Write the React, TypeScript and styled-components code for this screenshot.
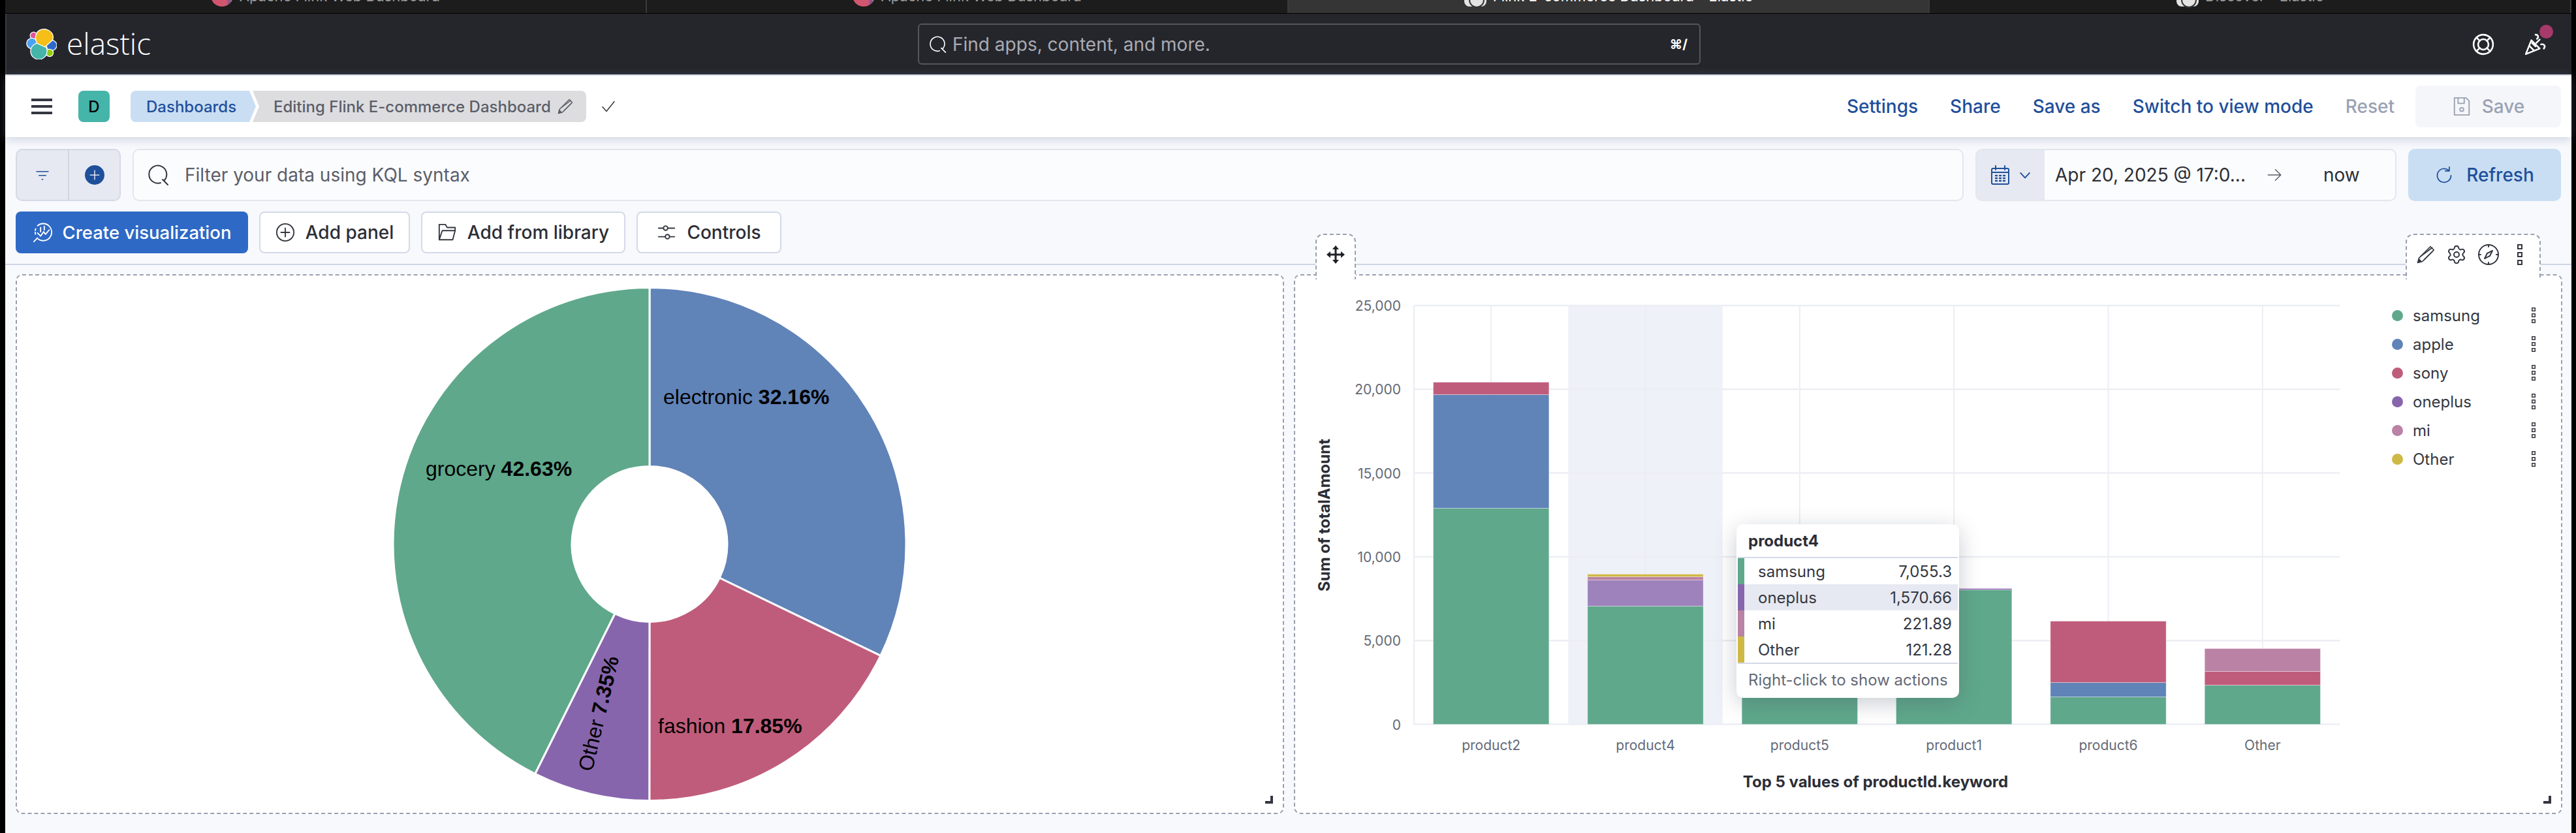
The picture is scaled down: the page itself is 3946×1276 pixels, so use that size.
import styled, { createGlobalStyle } from 'styled-components';
import { Settings } from 'lucide-react';

const GlobalStyle = createGlobalStyle`
    html, body {
        margin: 0;
        padding: 0;
        background: #000;
        overflow: hidden;
    }
    * {
        box-sizing: border-box;
    }
`;

//#region   Data
const GREEN = '#5fa88b';
const BLUE = '#6083b8';
const RED = '#c05c7b';
const PURPLE = '#8765ad';
const PINK = '#ba82a4';
const YELLOW = '#cfb945';

const tabs = [
    { title: 'Apache Flink Web Dashboard', flink: true, active: false },
    { title: 'Apache Flink Web Dashboard', flink: true, active: false },
    { title: 'Flink E-commerce Dashboard - Elastic', flink: false, active: true },
    { title: 'Discover - Elastic', flink: false, active: false },
];

const pieSlices = [
    { pct: 32.16, color: BLUE },
    { pct: 17.85, color: RED },
    { pct: 7.35, color: PURPLE },
    { pct: 42.64, color: GREEN },
];

// height of each stacked segment in chart pixels, from the zero line up
const bars = [
    { name: 'product2', parts: [{ h: 331, c: GREEN }, { h: 174, c: BLUE }, { h: 19, c: RED }] },
    { name: 'product4', parts: [{ h: 181, c: GREEN }, { h: 40, c: '#9d82bb' }, { h: 5, c: PINK }, { h: 4, c: YELLOW }] },
    { name: 'product5', parts: [{ h: 190, c: GREEN }] },
    { name: 'product1', parts: [{ h: 206, c: GREEN }, { h: 2, c: PURPLE }] },
    { name: 'product6', parts: [{ h: 42, c: GREEN }, { h: 22, c: BLUE }, { h: 94, c: RED }] },
    { name: 'Other', parts: [{ h: 60, c: GREEN }, { h: 21, c: RED }, { h: 35, c: PINK }] },
];

const legend = [
    { name: 'samsung', color: GREEN },
    { name: 'apple', color: BLUE },
    { name: 'sony', color: RED },
    { name: 'oneplus', color: PURPLE },
    { name: 'mi', color: PINK },
    { name: 'Other', color: YELLOW },
];

const tooltipRows = [
    { name: 'samsung', value: '7,055.3', color: GREEN, hot: false },
    { name: 'oneplus', value: '1,570.66', color: PURPLE, hot: true },
    { name: 'mi', value: '221.89', color: PINK, hot: false },
    { name: 'Other', value: '121.28', color: YELLOW, hot: false },
];
//#endregion

//#region   Frame and top bars
const Frame = styled.div`
    width: 3946px;
    height: 1276px;
    padding: 0 7px 0 8px;
    background: #000;
    font-family: Inter, "Noto Sans", sans-serif;
    overflow: hidden;
`;

const Screen = styled.div`
    height: 100%;
    display: flex;
    flex-direction: column;
    background: #f8f9fd;
`;

const TabStrip = styled.div`
    height: 21px;
    flex: none;
    display: grid;
    grid-template-columns: repeat(4, 1fr);
    border-bottom: 1px solid #000;
    overflow: hidden;
    box-shadow: inset 2px 0 #3a3a3a;
`;

const Tab = styled.div<{ $active: boolean }>`
    display: flex;
    justify-content: center;
    align-items: flex-start;
    gap: 10px;
    background: ${p => (p.$active ? '#353535' : '#1c1c1c')};
    border-right: 2px solid #3a3a3a;
    color: ${p => (p.$active ? '#fff' : '#9a9a9a')};
    font-size: 22px;
    line-height: 24px;
`;

const TabTitle = styled.span`
    margin-top: -18px;
    white-space: nowrap;
`;

const TabIcon = styled.span<{ $flink: boolean }>`
    position: relative;
    width: 34px;
    height: 32px;
    margin-top: -22px;
    border-radius: ${p => (p.$flink ? '50%' : '8px')};
    background: ${p => (p.$flink ? 'linear-gradient(90deg, #d0566f 70%, #7a4fa0 85%, #e0b030)' : '#e3e3e3')};
    &::after {
        content: '';
        display: ${p => (p.$flink ? 'none' : 'block')};
        position: absolute;
        left: 7px;
        top: 10px;
        width: 20px;
        height: 20px;
        border: 2px solid #333;
        border-radius: 50%;
    }
`;

const Header = styled.header`
    height: 93px;
    flex: none;
    display: grid;
    grid-template-columns: 1398px 1199px 1fr;
    align-items: center;
    background: #25262c;
    box-shadow: inset 2px 0 #3a3b40;
`;

const Brand = styled.div`
    display: flex;
    align-items: center;
    gap: 15px;
    padding-left: 32px;
`;

const BrandName = styled.span`
    color: #fff;
    font-family: "Open Sans", sans-serif;
    font-size: 46px;
    font-weight: 300;
    line-height: 47px;
    margin-top: -2px;
`;

const GlobalSearch = styled.div`
    height: 63px;
    display: flex;
    align-items: center;
    gap: 9px;
    padding: 0 18px 0 16px;
    border: 2px solid #55565c;
    border-radius: 6px;
    color: #a9abb2;
    font-size: 28px;
`;

const SearchGrow = styled.span`
    flex: 1;
`;

const Shortcut = styled.span`
    color: #fff;
    font-size: 20px;
    font-weight: 700;
`;

const HeaderIcons = styled.div`
    display: flex;
    justify-content: flex-end;
    align-items: center;
    gap: 46px;
    padding-right: 38px;
`;

const PartyWrap = styled.span`
    position: relative;
    display: flex;
`;

const Badge = styled.span`
    position: absolute;
    top: -13px;
    right: -10px;
    width: 21px;
    height: 21px;
    border-radius: 50%;
    background: #a8396b;
`;

const NavBar = styled.nav`
    height: 96px;
    flex: none;
    display: flex;
    align-items: center;
    background: #fff;
    border-top: 2px solid #d3dae6;
    padding: 0 16px 0 40px;
    box-shadow: 0 3px 14px rgba(120, 135, 165, 0.35);
    position: relative;
`;

const Avatar = styled.div`
    width: 48px;
    height: 48px;
    margin-left: 40px;
    border-radius: 8px;
    display: flex;
    align-items: center;
    justify-content: center;
    background: #45b5aa;
    color: #000;
    font-size: 24px;
    font-weight: 500;
`;

const Crumbs = styled.div`
    display: flex;
    margin-left: 32px;
    height: 48px;
`;

const CrumbLink = styled.div`
    width: 192px;
    padding-left: 24px;
    display: flex;
    align-items: center;
    background: #c9def3;
    color: #1f4f9b;
    font-size: 24px;
    font-weight: 500;
    border-radius: 8px 0 0 8px;
    clip-path: polygon(0 0, 182px 0, 192px 50%, 182px 100%, 0 100%);
`;

const CrumbCurrent = styled.div`
    width: 511px;
    margin-left: -5px;
    padding-left: 32px;
    display: flex;
    align-items: center;
    gap: 10px;
    background: #dddde0;
    color: #5b5e69;
    font-size: 24px;
    font-weight: 500;
    border-radius: 0 8px 8px 0;
    clip-path: polygon(0 0, 100% 0, 100% 100%, 0 100%, 10px 50%);
`;

const SavedCheck = styled.span`
    margin-left: 22px;
    display: flex;
`;

const NavActions = styled.div`
    margin-left: auto;
    display: flex;
    align-items: center;
`;

const NavLink = styled.span<{ $muted?: boolean }>`
    margin-right: 49px;
    color: ${p => (p.$muted ? '#9aa2b4' : '#1f4f9b')};
    font-size: 28px;
    font-weight: 500;
`;

const SaveButton = styled.div`
    width: 223px;
    height: 64px;
    margin-left: -17px;
    display: flex;
    align-items: center;
    justify-content: center;
    gap: 16px;
    border-radius: 8px;
    background: #f5f6f9;
    color: #9aa2b4;
    font-size: 28px;
    font-weight: 500;
`;
//#endregion

//#region   Query and action rows
const QueryRow = styled.div`
    display: flex;
    gap: 18px;
    height: 80px;
    margin-top: 18px;
    padding: 0 16px;
    flex: none;
`;

const FilterGroup = styled.div`
    width: 161px;
    display: grid;
    grid-template-columns: 80px 1fr;
    background: #e6e9f1;
    border: 2px solid #d3dae6;
    border-radius: 10px;
`;

const FilterCell = styled.div<{ $split?: boolean }>`
    display: flex;
    align-items: center;
    justify-content: center;
    border-right: ${p => (p.$split ? '2px solid #ced5e4' : '0')};
`;

const PlusDisc = styled.span`
    width: 30px;
    height: 30px;
    border-radius: 50%;
    background: #1f4f9b;
    display: flex;
    align-items: center;
    justify-content: center;
`;

const QueryInput = styled.div`
    flex: 1;
    display: flex;
    align-items: center;
    gap: 24px;
    padding-left: 22px;
    background: #fbfcfe;
    border: 2px solid #e3e6ed;
    border-radius: 10px;
    color: #5b5e69;
    font-size: 28px;
`;

const DatePicker = styled.div`
    width: 645px;
    display: flex;
    align-items: center;
    background: #fbfcfe;
    border: 2px solid #e3e6ed;
    border-radius: 10px;
    overflow: hidden;
    color: #2c2e36;
    font-size: 28px;
`;

const DateToggle = styled.div`
    width: 104px;
    height: 100%;
    display: flex;
    align-items: center;
    justify-content: center;
    gap: 12px;
    background: #e6e9f1;
`;

const DateFrom = styled.span`
    margin-left: 16px;
    width: 292px;
    white-space: nowrap;
`;

const DateArrow = styled.span`
    display: flex;
    margin-left: 32px;
`;

const DateTo = styled.span`
    margin-left: 63px;
`;

const RefreshButton = styled.div`
    width: 234px;
    display: flex;
    align-items: center;
    justify-content: center;
    gap: 20px;
    border-radius: 10px;
    background: #c9def3;
    color: #1f4f9b;
    font-size: 28px;
    font-weight: 500;
`;

const ActionRow = styled.div`
    display: flex;
    gap: 17px;
    flex: none;
    margin-top: 16px;
    padding: 0 16px 16px;
    border-bottom: 2px solid #ced5e4;
`;

const ActionButton = styled.div<{ $primary?: boolean; $width: number }>`
    width: ${p => p.$width}px;
    height: 64px;
    display: flex;
    align-items: center;
    justify-content: center;
    gap: 16px;
    border-radius: 8px;
    background: ${p => (p.$primary ? '#2e69c6' : '#fff')};
    border: ${p => (p.$primary ? '0' : '2px solid #d3dae6')};
    color: ${p => (p.$primary ? '#fff' : '#2c2e36')};
    font-size: ${p => (p.$primary ? '27.5px' : '28px')};
    font-weight: 500;
`;
//#endregion

//#region   Panels
const PanelGrid = styled.main`
    display: grid;
    grid-template-columns: 1943px 1943px;
    gap: 15px;
    margin-top: 14px;
    padding-left: 16px;
`;

const Panel = styled.section`
    position: relative;
    height: 827px;
    display: flex;
    background: #fff;
    border: 2px dashed #9aa0b0;
    border-radius: 10px;
`;

const PanelHandle = styled.div<{ $left: number; $width: number }>`
    position: absolute;
    top: -64px;
    left: ${p => p.$left}px;
    width: ${p => p.$width}px;
    height: 70px;
    display: flex;
    align-items: center;
    gap: 17px;
    padding: 0 0 8px 15px;
    background: #fff;
    border: 2px dashed #9aa0b0;
    border-bottom: 0;
    border-radius: 12px 12px 0 0;
    z-index: 2;
`;

const HandleKebab = styled.span`
    display: flex;
    margin-left: 11px;
`;

const ResizeMark = styled.span`
    position: absolute;
    right: 15px;
    bottom: 14px;
    width: 12px;
    height: 12px;
    border-right: 4px solid #343741;
    border-bottom: 4px solid #343741;
`;

const ChartSvg = styled.svg`
    display: block;
    flex: none;
`;

const PieLabel = styled.text`
    font-family: "Liberation Sans", Arial, sans-serif;
    font-size: 32px;
    fill: #000;
`;

const Strong = styled.tspan`
    font-weight: 700;
`;

const TickLabel = styled.text`
    font-family: Inter, sans-serif;
    font-size: 21px;
    fill: #646a77;
`;

const AxisTitle = styled.text`
    font-family: Inter, sans-serif;
    font-size: 24px;
    font-weight: 700;
    fill: #2c2e36;
`;

const Legend = styled.div`
    flex: 1;
    padding: 39px 39px 0 40px;
`;

const LegendRow = styled.div`
    height: 44px;
    display: flex;
    align-items: center;
    gap: 15px;
    color: #343741;
    font-size: 24px;
`;

const LegendDot = styled.span<{ $color: string }>`
    width: 17px;
    height: 17px;
    border-radius: 50%;
    background: ${p => p.$color};
`;

const LegendName = styled.span`
    flex: 1;
`;

const Tooltip = styled.div`
    position: absolute;
    left: 676px;
    top: 381px;
    width: 341px;
    height: 266px;
    padding: 0 2px;
    background: #fff;
    border-radius: 10px;
    box-shadow: 0 8px 34px rgba(60, 70, 90, 0.28);
    font-size: 24px;
    color: #343741;
    z-index: 1;
`;

const TooltipTitle = styled.div`
    height: 52px;
    padding-left: 16px;
    display: flex;
    align-items: center;
    font-weight: 700;
    color: #2c2e36;
    border-bottom: 2px solid #d3dae6;
`;

const TooltipRow = styled.div<{ $color: string; $hot: boolean }>`
    height: 40px;
    display: flex;
    align-items: center;
    justify-content: space-between;
    padding: 0 9px 0 21px;
    border-left: 10px solid ${p => p.$color};
    background: ${p => (p.$hot ? '#e6e9f1' : '#fff')};
`;

const TooltipFoot = styled.div`
    height: 51px;
    padding-left: 16px;
    display: flex;
    align-items: center;
    border-top: 2px solid #d3dae6;
    color: #646a77;
`;
//#endregion

//#region   Icons
const Glyph = ({ size, color, width = 2, children }: { size: number; color: string; width?: number; children: React.ReactNode }) => (
    <svg width={size} height={size} viewBox="0 0 32 32" fill="none" stroke={color} strokeWidth={width} strokeLinecap="round" strokeLinejoin="round">
        {children}
    </svg>
);

const ElasticLogo = () => (
    <svg width="47" height="47" viewBox="0 0 47 47" stroke="#fff" strokeWidth="1.3">
        <circle cx="11.5" cy="10.5" r="5.3" fill="#e0549b" />
        <circle cx="9" cy="22.5" r="8.2" fill="#4ba2ef" />
        <circle cx="39" cy="25.5" r="8" fill="#2e6ac9" />
        <circle cx="36" cy="37" r="5.6" fill="#93c90e" />
        <circle cx="19.5" cy="34.5" r="12.6" fill="#45b5aa" />
        <path d="M16 7 C19 1 26 0 31 1 C38 3 43 9 41 16 C40 19 36 21 29 28 L18 23 C15 21 13 13 16 7 Z" fill="#f5bf18" />
    </svg>
);

const SearchIcon = ({ color, size = 32 }: { color: string; size?: number }) => (
    <Glyph size={size} color={color}>
        <path d="M25 24 A13.5 13.5 0 1 0 19 28" />
        <path d="M22 23 L30 31" />
    </Glyph>
);

const PencilIcon = ({ color, size }: { color: string; size: number }) => (
    <Glyph size={size} color={color}>
        <path d="M2 30 L4 22 L24 2 L30 8 L10 28 Z" />
        <path d="M7 19 L27 4 M13 25 L28 10" />
        <path d="M2 30 L4 24 L8 28 Z" fill={color} />
    </Glyph>
);

const KebabIcon = ({ width }: { width: number }) => (
    <svg width={width} height={width * 4} viewBox="0 0 8 32" fill="none" stroke="#343741" strokeWidth="2">
        <rect x="1" y="1" width="6" height="6" />
        <rect x="1" y="13" width="6" height="6" />
        <rect x="1" y="25" width="6" height="6" />
    </svg>
);
//#endregion

function donutPath(start: number, end: number, outer: number, inner: number, cx: number, cy: number) {
    const point = (pct: number, r: number) => {
        const a = (pct / 100) * Math.PI * 2;
        return `${cx + r * Math.sin(a)} ${cy - r * Math.cos(a)}`;
    };
    const big = end - start > 50 ? 1 : 0;
    return `M${point(start, outer)} A${outer} ${outer} 0 ${big} 1 ${point(end, outer)} L${point(end, inner)} A${inner} ${inner} 0 ${big} 0 ${point(start, inner)} Z`;
}

function PieChart() {
    const cx = 969;
    const cy = 411.5;
    let running = 0;
    return (
        <ChartSvg width="1939" height="823" viewBox="0 0 1939 823">
            {pieSlices.map(s => {
                const d = donutPath(running, running + s.pct, 393, 119, cx, cy);
                running += s.pct;
                return <path key={s.color} d={d} fill={s.color} stroke="#fff" strokeWidth="3" />;
            })}
            <PieLabel x="990" y="197">electronic <Strong>32.16%</Strong></PieLabel>
            <PieLabel x="626" y="307">grocery <Strong>42.63%</Strong></PieLabel>
            <PieLabel x="982" y="701">fashion <Strong>17.85%</Strong></PieLabel>
            <PieLabel x="0" y="0" transform="translate(881 761) rotate(-76.7)">Other <Strong>7.35%</Strong></PieLabel>
        </ChartSvg>
    );
}

function BarChart() {
    const left = 182;
    const right = 1600;
    const top = 46;
    const zero = 687.5;
    const band = (right - left) / 6;
    const barWidth = band * 0.75;
    const ticks = ['0', '5,000', '10,000', '15,000', '20,000', '25,000'];
    const step = (zero - top) / 5;
    return (
        <ChartSvg width="1640" height="823" viewBox="0 0 1640 823">
            <rect x={left + band} y={top} width={band} height={zero - top} fill="#eef1f8" />
            {ticks.map((t, i) => (
                <g key={t}>
                    <line x1={left} x2={right} y1={zero - i * step} y2={zero - i * step} stroke="#eceef4" strokeWidth="2.5" />
                    <TickLabel x={left - 20} y={zero - i * step + 8} textAnchor="end">{t}</TickLabel>
                </g>
            ))}
            <line x1={left} x2={left} y1={top} y2={zero} stroke="#eceef4" strokeWidth="2.5" />
            {bars.map((b, i) => {
                const center = left + band * (i + 0.5);
                let base = zero;
                return (
                    <g key={b.name}>
                        <line x1={center} x2={center} y1={top} y2={zero} stroke="#eceef4" strokeWidth="2" />
                        {b.parts.map(part => {
                            base -= part.h;
                            return <rect key={part.c} x={center - barWidth / 2} y={base} width={barWidth} height={part.h} fill={part.c} stroke="#fff" strokeOpacity="0.35" />;
                        })}
                        <TickLabel x={center} y={727} textAnchor="middle">{b.name}</TickLabel>
                    </g>
                );
            })}
            <AxisTitle x="0" y="0" textAnchor="middle" transform="translate(53 367) rotate(-90)">Sum of totalAmount</AxisTitle>
            <AxisTitle x="889" y="784" textAnchor="middle">Top 5 values of productId.keyword</AxisTitle>
        </ChartSvg>
    );
}

export default function App() {
    return (
        <Frame>
            <GlobalStyle />
            <Screen>
                <TabStrip>
                    {tabs.map((tab, i) => (
                        <Tab key={i} $active={tab.active}>
                            <TabIcon $flink={tab.flink} />
                            <TabTitle>{tab.title}</TabTitle>
                        </Tab>
                    ))}
                </TabStrip>

                <Header>
                    <Brand>
                        <ElasticLogo />
                        <BrandName>elastic</BrandName>
                    </Brand>
                    <GlobalSearch>
                        <SearchIcon color="#fff" size={26} />
                        <SearchGrow>Find apps, content, and more.</SearchGrow>
                        <Shortcut>⌘/</Shortcut>
                    </GlobalSearch>
                    <HeaderIcons>
                        <Glyph size={34} color="#fff" width={2.4}>
                            <circle cx="16" cy="16" r="14" />
                            <circle cx="16" cy="16" r="7.5" />
                            <path d="M6 6 L11 11 M26 6 L21 11 M6 26 L11 21 M26 26 L21 21" />
                        </Glyph>
                        <PartyWrap>
                            <Glyph size={34} color="#fff" width={2.4}>
                                <path d="M2 30 L10 10 L22 22 Z" />
                                <path d="M7 18 L14 25 M11 14 L16 19" />
                                <path d="M17 14 L22 9 M16 2 C20 2 21 6 18 8 M24 16 C28 15 31 18 28 22" />
                            </Glyph>
                            <Badge />
                        </PartyWrap>
                    </HeaderIcons>
                </Header>

                <NavBar>
                    <svg width="32" height="24" viewBox="0 0 32 24" fill="#343741">
                        <rect y="0" width="32" height="4" />
                        <rect y="10" width="32" height="4" />
                        <rect y="20" width="32" height="4" />
                    </svg>
                    <Avatar>D</Avatar>
                    <Crumbs>
                        <CrumbLink>Dashboards</CrumbLink>
                        <CrumbCurrent>
                            Editing Flink E-commerce Dashboard
                            <PencilIcon color="#5b5e69" size={24} />
                        </CrumbCurrent>
                    </Crumbs>
                    <SavedCheck>
                        <Glyph size={24} color="#343741">
                            <path d="M4 17 L12 26 L28 6" />
                        </Glyph>
                    </SavedCheck>
                    <NavActions>
                        <NavLink>Settings</NavLink>
                        <NavLink>Share</NavLink>
                        <NavLink>Save as</NavLink>
                        <NavLink>Switch to view mode</NavLink>
                        <NavLink $muted>Reset</NavLink>
                        <SaveButton>
                            <Glyph size={30} color="#9aa2b4">
                                <path d="M4 2 H23 L28 7 V30 H4 Z" />
                                <path d="M10 2 V11 H20 V2" />
                                <circle cx="16" cy="21" r="3" />
                            </Glyph>
                            Save
                        </SaveButton>
                    </NavActions>
                </NavBar>

                <QueryRow>
                    <FilterGroup>
                        <FilterCell $split>
                            <Glyph size={24} color="#1f4f9b">
                                <path d="M4 9 H28 M9 17 H23 M15 25 H17" />
                            </Glyph>
                        </FilterCell>
                        <FilterCell>
                            <PlusDisc>
                                <Glyph size={20} color="#fff">
                                    <path d="M16 5 V27 M5 16 H27" />
                                </Glyph>
                            </PlusDisc>
                        </FilterCell>
                    </FilterGroup>
                    <QueryInput>
                        <SearchIcon color="#343741" />
                        Filter your data using KQL syntax
                    </QueryInput>
                    <DatePicker>
                        <DateToggle>
                            <Glyph size={32} color="#1f4f9b">
                                <rect x="3" y="6" width="26" height="24" rx="2" />
                                <path d="M3 12 H29 M9 2 V8 M23 2 V8" />
                                <path d="M9 17 H11 M15 17 H17 M21 17 H23 M9 21 H11 M15 21 H17 M21 21 H23 M9 25 H11 M15 25 H17 M21 25 H23" strokeWidth="2.4" />
                            </Glyph>
                            <Glyph size={20} color="#1f4f9b" width={3}>
                                <path d="M5 11 L16 23 L27 11" />
                            </Glyph>
                        </DateToggle>
                        <DateFrom>Apr 20, 2025 @ 17:0...</DateFrom>
                        <DateArrow>
                            <Glyph size={24} color="#5b5e69">
                                <path d="M3 16 H29 M18 5 L29 16 L18 27" />
                            </Glyph>
                        </DateArrow>
                        <DateTo>now</DateTo>
                    </DatePicker>
                    <RefreshButton>
                        <Glyph size={28} color="#1f4f9b">
                            <path d="M24 8 A12 12 0 1 0 28 17" />
                            <path d="M25 2 V9 H18" />
                        </Glyph>
                        Refresh
                    </RefreshButton>
                </QueryRow>

                <ActionRow>
                    <ActionButton $primary $width={356}>
                        <Glyph size={30} color="#fff">
                            <path d="M8 5 A14 14 0 1 1 9 27" />
                            <path d="M5 10 A14 14 0 0 0 5 20" strokeDasharray="3 3" />
                            <path d="M2 31 L8 25 M8 17 L13 22 L18 15 L21 19 L27 12 M13 8 V15 M19 6 V12" />
                        </Glyph>
                        Create visualization
                    </ActionButton>
                    <ActionButton $width={231}>
                        <Glyph size={30} color="#343741">
                            <circle cx="16" cy="16" r="14" />
                            <path d="M16 9 V23 M9 16 H23" />
                        </Glyph>
                        Add panel
                    </ActionButton>
                    <ActionButton $width={313}>
                        <Glyph size={30} color="#343741">
                            <path d="M3 28 V3 H13 L16 8 H29 V13 H8 L3 28 H25 L29 13" />
                        </Glyph>
                        Add from library
                    </ActionButton>
                    <ActionButton $width={222}>
                        <Glyph size={30} color="#343741">
                            <path d="M3 9 H11 M18 9 H29 M3 23 H14 M21 23 H29" />
                            <circle cx="14.5" cy="9" r="3.5" />
                            <circle cx="17.5" cy="23" r="3.5" />
                        </Glyph>
                        Controls
                    </ActionButton>
                </ActionRow>

                <PanelGrid>
                    <Panel>
                        <PieChart />
                        <ResizeMark />
                    </Panel>
                    <Panel>
                        <PanelHandle $left={31} $width={62}>
                            <svg width="28" height="28" viewBox="0 0 28 28" fill="#1f2126">
                                <path d="M14 0 L19 6 H15.5 V12.5 H22 V9 L28 14 L22 19 V15.5 H15.5 V22 H19 L14 28 L9 22 H12.5 V15.5 H6 V19 L0 14 L6 9 V12.5 H12.5 V6 H9 Z" />
                            </svg>
                        </PanelHandle>
                        <PanelHandle $left={1701} $width={207}>
                            <PencilIcon color="#343741" size={28} />
                            <Settings size={32} color="#343741" strokeWidth={1.5} />
                            <Glyph size={32} color="#343741">
                                <circle cx="16" cy="16" r="15" />
                                <path d="M22 10 L18 18 L10 22 L14 14 Z" />
                                <path d="M16 1 V4 M16 28 V31 M1 16 H4 M28 16 H31" />
                            </Glyph>
                            <HandleKebab>
                                <KebabIcon width={8} />
                            </HandleKebab>
                        </PanelHandle>
                        <BarChart />
                        <Legend>
                            {legend.map(item => (
                                <LegendRow key={item.name}>
                                    <LegendDot $color={item.color} />
                                    <LegendName>{item.name}</LegendName>
                                    <KebabIcon width={6} />
                                </LegendRow>
                            ))}
                        </Legend>
                        <Tooltip>
                            <TooltipTitle>product4</TooltipTitle>
                            {tooltipRows.map(row => (
                                <TooltipRow key={row.name} $color={row.color} $hot={row.hot}>
                                    <span>{row.name}</span>
                                    <span>{row.value}</span>
                                </TooltipRow>
                            ))}
                            <TooltipFoot>Right-click to show actions</TooltipFoot>
                        </Tooltip>
                        <ResizeMark />
                    </Panel>
                </PanelGrid>
            </Screen>
        </Frame>
    );
}
